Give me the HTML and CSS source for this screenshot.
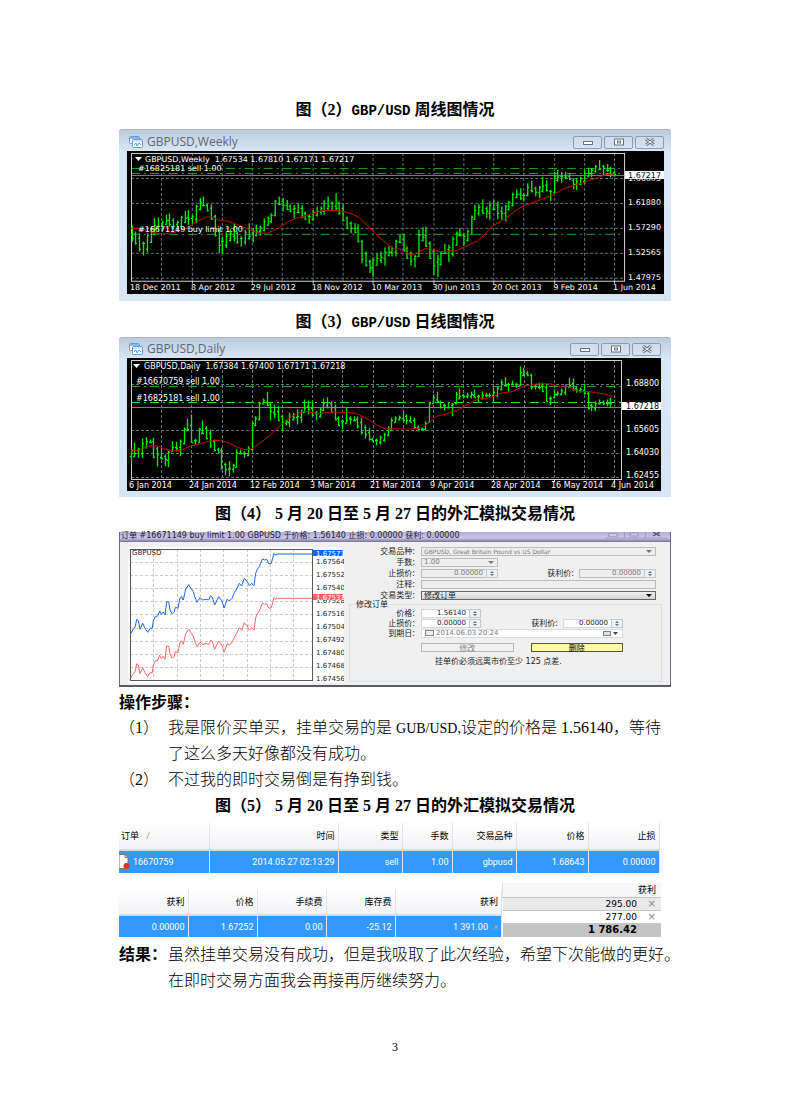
FILE: index.html
```html
<!DOCTYPE html>
<html lang="zh-CN">
<head>
<meta charset="utf-8">
<title>外汇模拟交易</title>
<link rel="stylesheet" href="styles.css">
</head>
<body>
<main class="page">
  <h2 class="caption">图（2）<span class="pair">GBP/USD</span> 周线图情况</h2>
  <figure class="window">
    <header class="window-bar">
      <svg class="window-icon" viewBox="0 0 14 12" aria-hidden="true"><rect x=".5" y=".5" width="10" height="7" rx="1" fill="#fff" stroke="#5b9be0"/><path d="M1 2h9" stroke="#5b9be0" stroke-width="1.4"/><rect x="3.5" y="3.500" width="10" height="8" rx="1" fill="#fff" stroke="#5b9be0"/><path d="M4 5h9" stroke="#a9cdf3"/><path d="M5 9l2-2 1 3 2-3 2 2" fill="none" stroke="#5b9be0"/></svg>
      <span class="window-title">GBPUSD,Weekly</span>
      <span class="window-buttons">
        <button type="button" aria-label="最小化"><svg viewBox="0 0 12 8"><rect x="1.500" y="3.500" width="9" height="3" fill="#fff" stroke="#66707c"/></svg></button>
        <button type="button" aria-label="最大化"><svg viewBox="0 0 12 8"><rect x="1.500" y="1" width="9" height="6" fill="#fff" stroke="#66707c"/><rect x="4.500" y="3" width="3" height="2" fill="none" stroke="#66707c"/></svg></button>
        <button type="button" aria-label="关闭"><svg viewBox="0 0 12 8"><path d="M2 1l8 6M10 1l-8 6" stroke="#66707c" stroke-width="3"/><path d="M2 1l8 6M10 1l-8 6" stroke="#fff" stroke-width="1"/></svg></button>
      </span>
    </header>
    <svg class="chart" id="weekly" viewBox="0 0 538 143" role="img" aria-label="GBPUSD 周线图">
      <g class="plot"></g>
      <path d="M8 6h7l-3.500 4z" fill="#fff"/>
      <text x="18" y="11">GBPUSD,Weekly&#160; 1.67534 1.67810 1.67171 1.67217</text>
      <text x="11" y="20">#16825181 sell 1.00</text>
      <text x="11" y="81">#16671149 buy limit 1.00</text>
      <g class="prices">
        <text x="502" y="30">1.66605</text>
        <rect x="499" y="20" width="39" height="8" fill="#fff"/>
        <text x="502" y="27" class="current">1.67217</text>
        <text x="502" y="54">1.61880</text><text x="502" y="79">1.57290</text>
        <text x="502" y="104">1.52565</text><text x="502" y="129">1.47975</text>
      </g>
      <g class="dates">
        <text x="3" y="139">18 Dec 2011</text><text x="64" y="139">8 Apr 2012</text><text x="124" y="139">29 Jul 2012</text>
        <text x="185" y="139">18 Nov 2012</text><text x="245" y="139">10 Mar 2013</text><text x="306" y="139">30 Jun 2013</text>
        <text x="366" y="139">20 Oct 2013</text><text x="427" y="139">9 Feb 2014</text><text x="487" y="139">1 Jun 2014</text>
      </g>
    </svg>
  </figure>

  <h2 class="caption caption-second">图（3）<span class="pair">GBP/USD</span> 日线图情况</h2>
  <figure class="window window-daily">
    <header class="window-bar">
      <svg class="window-icon" viewBox="0 0 14 12" aria-hidden="true"><rect x=".5" y=".5" width="10" height="7" rx="1" fill="#fff" stroke="#5b9be0"/><path d="M1 2h9" stroke="#5b9be0" stroke-width="1.4"/><rect x="3.500" y="3.500" width="10" height="8" rx="1" fill="#fff" stroke="#5b9be0"/><path d="M4 5h9" stroke="#a9cdf3"/><path d="M5 9l2-2 1 3 2-3 2 2" fill="none" stroke="#5b9be0"/></svg>
      <span class="window-title">GBPUSD,Daily</span>
      <span class="window-buttons">
        <button type="button" aria-label="最小化"><svg viewBox="0 0 12 8"><rect x="1.500" y="3.500" width="9" height="3" fill="#fff" stroke="#66707c"/></svg></button>
        <button type="button" aria-label="最大化"><svg viewBox="0 0 12 8"><rect x="1.500" y="1" width="9" height="6" fill="#fff" stroke="#66707c"/><rect x="4.500" y="3" width="3" height="2" fill="none" stroke="#66707c"/></svg></button>
        <button type="button" aria-label="关闭"><svg viewBox="0 0 12 8"><path d="M2 1l8 6M10 1l-8 6" stroke="#66707c" stroke-width="3"/><path d="M2 1l8 6M10 1l-8 6" stroke="#fff" stroke-width="1"/></svg></button>
      </span>
    </header>
    <svg class="chart" id="daily" viewBox="0 0 534 133" role="img" aria-label="GBPUSD 日线图">
      <g class="plot"></g>
      <path d="M6 6h7l-3.500 4z" fill="#fff"/>
      <text x="17" y="11">GBPUSD,Daily&#160; 1.67384 1.67400 1.67171 1.67218</text>
      <text x="9" y="26">#16670759 sell 1.00</text>
      <text x="9" y="43">#16825181 sell 1.00</text>
      <g class="prices">
        <text x="499" y="28">1.68800</text>
        <rect x="495" y="44" width="39" height="8" fill="#fff"/>
        <text x="499" y="51" class="current">1.67218</text>
        <text x="499" y="74">1.65605</text><text x="499" y="97">1.64030</text><text x="499" y="120">1.62455</text>
      </g>
      <g class="dates">
        <text x="2" y="130">6 Jan 2014</text><text x="62" y="130">24 Jan 2014</text><text x="123" y="130">12 Feb 2014</text>
        <text x="183" y="130">3 Mar 2014</text><text x="243" y="130">21 Mar 2014</text><text x="303" y="130">9 Apr 2014</text>
        <text x="364" y="130">28 Apr 2014</text><text x="424" y="130">16 May 2014</text><text x="484" y="130">4 Jun 2014</text>
      </g>
    </svg>
  </figure>

  <h2 class="caption caption-third">图（4） 5 月 20 日至 5 月 27 日的外汇模拟交易情况</h2>
  <form class="order" onsubmit="return false">
    <header class="order-bar">
      <span>订单 #16671149 buy limit 1.00 GBPUSD 于价格: 1.56140 止损: 0.00000 获利: 0.00000</span>
      <svg class="order-controls" viewBox="0 0 66 10" aria-hidden="true"><path d="M20.500 0v6M41.500 0v6M1 6h62" stroke="#8c84a8" fill="none" stroke-width=".6"/><rect x="5" y="2" width="8" height="2" fill="#fff" stroke="#77708f" stroke-width=".7"/><rect x="26" y="1" width="8" height="3" fill="#ccc6e6" stroke="#8c84a8" stroke-width=".7"/><path d="M49 0l7 4M56 0l-7 4" stroke="#555068" stroke-width="1.400"/></svg>
    </header>
    <div class="order-body">
      <svg class="ticks" id="ticks" viewBox="0 0 216 136" role="img" aria-label="GBPUSD 报价走势">
        <g class="plot"></g>
        <text x="4" y="8">GBPUSD</text>
        <g id="tick-prices"></g>
        <rect x="185" y="3" width="30" height="6" fill="#06f"/><text x="188" y="9" class="tag">1.67571</text>
        <rect x="185" y="47" width="30" height="6" fill="#ff5c5c"/><text x="188" y="53" class="tag">1.67531</text>
      </svg>
      <div class="fields">
        <div class="rows">
          <div class="row"><label for="symbol">交易品种:</label><span class="drop wide small"><select id="symbol" disabled><option>GBPUSD, Great Britain Pound vs US Dollar</option></select></span></div>
          <div class="row"><label for="lots">手数:</label><span class="drop mid"><select id="lots" disabled><option>1.00</option></select></span></div>
          <div class="row"><label for="sl">止损价:</label><span class="spin mid off"><input id="sl" value="0.00000" disabled><i></i></span><label class="second" for="tp">获利价:</label><span class="spin mid off"><input id="tp" value="0.00000" disabled><i></i></span></div>
          <div class="row"><label for="note">注释:</label><input class="note" id="note" disabled></div>
          <div class="row"><label for="type">交易类型:</label><span class="drop wide active"><select id="type"><option>修改订单</option></select></span></div>
        </div>
        <fieldset class="modify">
          <legend>修改订单</legend>
          <div class="row"><label for="price">价格:</label><span class="spin"><input id="price" value="1.56140"><i></i></span></div>
          <div class="row"><label for="sl2">止损价:</label><span class="spin"><input id="sl2" value="0.00000"><i></i></span><label class="second" for="tp2">获利价:</label><span class="spin"><input id="tp2" value="0.00000"><i></i></span></div>
          <div class="row"><label for="expiry">到期日:</label><span class="date"><input type="checkbox" aria-label="启用到期日"><input id="expiry" value="2014.06.03 20:24"><svg viewBox="0 0 15 7" aria-hidden="true"><rect x=".5" y="1.500" width="7" height="4" fill="#dde3ea" stroke="#77808c"/><path d="M10 2h5l-2.500 3z" fill="#345"/></svg></span></div>
          <div class="row actions"><button type="button" class="edit" disabled>修改</button><button type="button" class="delete">删除</button></div>
          <p class="hint">挂单价必须远离市价至少 125 点差.</p>
        </fieldset>
      </div>
    </div>
  </form>

  <h3 class="steps-title">操作步骤：</h3>
  <ol class="steps">
    <li><span class="num">（1）</span><span>我是限价买单买，挂单交易的是 <span class="code">GUB/USD,</span>设定的价格是 1.56140，等待了这么多天好像都没有成功。</span></li>
    <li><span class="num">（2）</span><span>不过我的即时交易倒是有挣到钱。</span></li>
  </ol>
  <h2 class="caption caption-inline">图（5） 5 月 20 日至 5 月 27 日的外汇模拟交易情况</h2>

  <table class="grid orders">
    <colgroup><col class="c-id"><col class="c-time"><col class="c-type"><col class="c-lots"><col class="c-sym"><col class="c-price"><col class="c-sl"></colgroup>
    <thead><tr><th class="left">订单 <span class="sort">/</span></th><th>时间</th><th>类型</th><th>手数</th><th>交易品种</th><th>价格</th><th>止损</th></tr></thead>
    <tbody><tr><td class="left"><span class="order-id"><svg viewBox="0 0 11 16" aria-hidden="true"><path d="M0 .5h6l3 3v11H0z" fill="#fff" stroke="#8a7a6a"/><path d="M6 .5v3h3" fill="none" stroke="#8a7a6a"/><circle cx="7.500" cy="12" r="3" fill="#d8391c"/></svg>16670759</span></td><td>2014.05.27 02:13:29</td><td>sell</td><td>1.00</td><td>gbpusd</td><td>1.68643</td><td>0.00000</td></tr></tbody>
  </table>

  <div class="results">
    <table class="grid profit">
      <colgroup><col class="p-a"><col class="p-b"><col class="p-b"><col class="p-b"><col></colgroup>
      <thead><tr><th>获利</th><th>价格</th><th>手续费</th><th>库存费</th><th>获利</th></tr></thead>
      <tbody><tr><td>0.00000</td><td>1.67252</td><td>0.00</td><td>-25.12</td><td>1 391.00 <span class="cross">×</span></td></tr></tbody>
    </table>
    <table class="totals">
      <thead><tr><th>获利</th></tr></thead>
      <tbody>
        <tr class="shade"><td>295.00<span class="x">×</span></td></tr>
        <tr><td>277.00<span class="x">×</span></td></tr>
        <tr class="sum"><td>1 786.42<span class="x"></span></td></tr>
      </tbody>
    </table>
  </div>

  <div class="outcome"><strong>结果：</strong><p>虽然挂单交易没有成功，但是我吸取了此次经验，希望下次能做的更好。在即时交易方面我会再接再厉继续努力。</p></div>
  <footer class="page-number">3</footer>
</main>
<script src="charts.js"></script>
</body>
</html>
```

FILE: styles.css
```css
* { box-sizing: border-box; }
body {
  margin: 0;
  background: #fff;
  color: #000;
  font: 16px/26px "Liberation Serif", "Noto Sans CJK SC", serif;
}
.page { padding: 97px 121px 0 119px; }

.caption { margin: 0 0 6px; font-size: 16px; line-height: 26px; font-weight: 700; text-align: center; }
.caption-second { margin: 8px 0 2px; }
.caption-third { margin: 4px 0 5px; }
.caption-inline { margin: 0 0 4px; }
.pair { font: 700 14px/1 "Liberation Mono", monospace; }

/* chart windows */
.window {
  margin: 0;
  padding: 0 7px 7px 8px;
  background: linear-gradient(#bccbdc, #dbe7f4 22px, #d7e4f2);
  border-top: 1px solid #a9b5c2;
  border-radius: 3px 3px 0 0;
}
.window-daily { padding: 0 10px 6px 8px; }
.window-bar { display: flex; align-items: center; gap: 4px; height: 21px; padding-left: 2px; padding-top: 3px; }
.window-daily .window-bar { height: 20px; }
.window-icon { width: 14px; height: 12px; }
.window-title { flex: 1; color: #5c6873; font: 12px/18px "Open Sans", sans-serif; }
.window-buttons { display: flex; gap: 2px; }
.window-buttons button {
  display: flex; align-items: center; justify-content: center;
  width: 29px; height: 13px; padding: 0;
  background: linear-gradient(#cfdbe9, #d6e2ef);
  border: 1px solid #8b9bb0; border-radius: 2px;
}
.window-buttons svg { width: 12px; height: 8px; }
.chart { display: block; width: 100%; background: #000; }
.chart text { fill: #fff; font: 8px "DejaVu Sans", sans-serif; }
.chart .current { fill: #000; }
.frame { fill: none; stroke: #d0d0d0; }
.grid-line { stroke: #66727f; stroke-dasharray: 3 2; fill: none; }
.level { stroke: #22a022; stroke-dasharray: 9 4 2 4; fill: none; }
.level.bright { stroke: #2fe02f; }
.last { stroke: #77828f; }
.bars { stroke: #00f000; stroke-width: 1.3; fill: none; }
.average { stroke: #c80000; fill: none; }

/* order dialog */
.order {
  color: #222;
  background: #f0f0f0;
  border: 1px solid #6d6880;
  border-top: 0; border-bottom: 2px solid #5a5a66;
  font: 8px/9px "DejaVu Sans", "Noto Sans CJK SC", sans-serif;
}
.order-bar {
  display: flex; justify-content: space-between; height: 10px; padding-left: 1px;
  background: linear-gradient(#b4abd8, #cbc5ea 60%, #77719a);
  line-height: 8px; white-space: nowrap;
}
.order-controls { width: 66px; height: 10px; }
.order-body { display: flex; gap: 5px; padding: 5px 8px 2px; }
.ticks { width: 216px; flex: none; align-self: flex-start; background: #fff; }
.ticks text { fill: #222; font: 7px "DejaVu Sans", sans-serif; }
.ticks .tag { fill: #fff; }
.ticks .grid-line { stroke: #c8cccc; stroke-width: 1; }
.ticks .frame { stroke: #555; }
.bid, .ask { fill: none; stroke: #ff6666; }
.ask { stroke: #1a66ee; }
.fields { flex: 1; }
.rows { display: flex; flex-direction: column; gap: 2px; padding-right: 6px; }
.row { display: flex; align-items: center; height: 9px; }
.row label { width: 66px; margin-right: 6px; text-align: right; white-space: nowrap; }
.row .second { flex: 1; width: auto; margin-right: 5px; }
.order input, .order select {
  min-width: 0; height: 9px; padding: 0 2px; margin: 0;
  color: #222; background: #fff; border: 1px solid #d4d8dc; border-radius: 0;
  font: 7px/7px "DejaVu Sans", "Noto Sans CJK SC", sans-serif;
  appearance: none; outline: 0; opacity: 1;
}
.order input:disabled, .order select:disabled { color: #777; background: #eee; border-color: #bbb; }
.drop { position: relative; display: flex; }
.drop select { width: 100%; }
.drop.wide, .note { flex: 1; }
.drop::after {
  content: ""; position: absolute; right: 4px; top: 3px;
  border: 3px solid transparent; border-top-color: #777; border-bottom: 0;
}
.order .small select { font-size: 6px; }
.order .active select { font-size: 8px; background: linear-gradient(#f2f2f2, #d2d2d2); border-color: #666; }
.drop.active::after { border-top-color: #000; }
.mid { width: 77px; }
.spin { position: relative; display: flex; width: 60px; }
.spin.mid { width: 77px; }
.spin input { width: 100%; padding-right: 14px; text-align: right; }
.spin i {
  position: absolute; right: 0; top: 0; width: 12px; height: 9px;
  border: 1px solid #c4c8cc; background: #eef1f4;
}
.spin i::before, .spin i::after { content: ""; position: absolute; left: 3px; top: 1px; border: 2px solid transparent; border-top: 0; border-bottom-color: #56729a; }
.spin i::after { top: 4px; border-top: 2px solid #56729a; border-bottom: 0; }
.modify { margin: 1px 0 0; padding: 0 38px 15px 0; min-width: 0; border: 1px solid #d5dfe5; }
.modify legend { margin-left: 5px; padding: 0 1px; line-height: 8px; }
.modify .row { height: 9px; margin-bottom: 1px; }
.modify .row label:first-child { width: 65px; }
.date { display: flex; align-items: center; flex: 1; padding: 0 4px 0 3px; height: 9px; background: #fff; border: 1px solid #d8dcdf; }
.date input { flex: 1; height: 7px; border: 0; color: #777; }
.date input[type="checkbox"] { flex: none; width: 9px; height: 6px; border: 1px solid #888; background: #eee; }
.date svg { width: 15px; height: 7px; }
.modify .actions { gap: 17px; margin: 5px 0; padding-left: 71px; }
.actions button { flex: 1; height: 9px; padding: 0; font: 8px/7px "Noto Sans CJK SC", sans-serif; border: 1px solid #b5b5b5; background: #f1f1f1; color: #888; }
.actions .delete { color: #000; background: #ffff99; border-color: #555; }
.hint { margin: 0 0 0 85px; white-space: nowrap; }

/* body text */
.steps-title { margin: 4px 0 0; font-size: 16px; line-height: 24px; }
.steps { margin: 0; padding: 0; list-style: none; font-weight: 300; }
.steps li { display: flex; }
.num { flex: none; width: 49px; }
.code { font-size: 14px; line-height: 1; }

/* trade tables */
table { border-collapse: collapse; }
.grid { table-layout: fixed; font: 9px/12px Roboto, "Noto Sans CJK SC", sans-serif; }
.grid th, .grid td { padding: 0 3px 0 0; text-align: right; white-space: nowrap; border-right: 1px solid #e2e4e8; }
.grid th { height: 27px; font-weight: 400; background: linear-gradient(#fff, #f1f2f4); border-bottom: 2px solid #dcdcdc; }
.grid td { height: 23px; color: #fff; background: #3399ff; }
.grid .left { padding-left: 2px; text-align: left; }
.grid td.left { padding-left: 0; }
.orders { width: 540px; }
.c-id { width: 90px; } .c-time { width: 129px; } .c-type { width: 64px; } .c-lots { width: 50px; }
.c-sym { width: 64px; } .c-price { width: 72px; } .c-sl { width: 71px; }
.sort { margin-left: 5px; color: #999; }
.order-id { display: flex; align-items: center; gap: 3px; }
.order-id svg { width: 11px; height: 16px; }
.results { display: flex; align-items: flex-end; margin-top: 10px; }
.profit { width: 383px; }
.profit th { height: 25px; }
.profit td { height: 22px; }
.p-a, .p-b { width: 69px; }
.cross { margin-left: 3px; color: #d9a066; }
.totals { width: 159px; font: 9px/12px "DejaVu Sans", "Noto Sans CJK SC", sans-serif; }
.totals th, .totals td { height: 13px; padding: 0 5px 0 0; text-align: right; white-space: nowrap; border-bottom: 1px solid #c4c4c4; }
.totals th { height: 15px; font-weight: 400; background: #f6f6f7; border-left: 1px solid #ddd; }
.totals .shade { background: #e9e9e9; }
.totals .sum { background: #c4c4c4; font-weight: 700; font-size: 10px; }
.x { display: inline-block; width: 19px; color: #888; font-size: 10px; }

.outcome { display: flex; margin: 5px -10px 0 0; font-weight: 300; }
.outcome strong { flex: none; width: 49px; font-weight: 700; }
.outcome p { margin: 0; }
.page-number { margin-top: 40px; text-align: center; font-size: 12px; }
```

FILE: charts.js
```js
const NS = "http://www.w3.org/2000/svg";
function add(parent, tag, attrs, text) {
  const node = document.createElementNS(NS, tag);
  for (const key in attrs) node.setAttribute(key, attrs[key]);
  if (text) node.textContent = text;
  parent.appendChild(node);
}

// Series values are stored three units to one drawing unit.
function drawChart(id, c) {
  const plot = document.querySelector("#" + id + " .plot");
  const X = v => (v / 3 - c.dx).toFixed(1);
  const Y = v => (v / 3 - c.dy).toFixed(1);
  const [l, t, r, b] = c.frame;
  for (let i = 1; i <= c.columns; i++) {
    const x = Math.round(l + i * c.step) + 0.5;
    add(plot, "path", { class: "grid-line", d: `M${x} ${t}V${b}` });
    if (c.marks && i % 2 === 0) add(plot, "path", { class: "frame", d: `M${x} ${b}v3` });
  }
  c.rows.forEach(v => add(plot, "path", { class: "grid-line", d: `M${l} ${Math.round(Y(v)) + 0.5}H${r}` }));
  c.levels.forEach(([v, kind]) => add(plot, "path", { class: "level " + kind, d: `M${l} ${Math.round(Y(v)) + 0.5}H${r}` }));
  if (c.last) add(plot, "path", { class: "last", d: `M${l} ${Math.round(Y(c.last)) + 0.5}H${r}` });
  add(plot, "rect", { class: "frame", x: l + 0.5, y: t + 0.5, width: r - l, height: b - t });
  if (c.bars) {
    const mids = [];
    for (let i = 0; i < c.bars.length; i += 2) mids.push((c.bars[i] + c.bars[i + 1]) / 2);
    let d = "";
    mids.forEach((m, i) => {
      const x = Math.round(X(c.first + i * 11.33)) + 0.5;
      const hi = c.bars[2 * i], lo = c.bars[2 * i + 1];
      const fit = v => Math.round(Y(Math.max(hi + 4, Math.min(lo - 4, v)))) + 0.5;
      d += `M${x} ${Y(hi)}V${Y(lo)}M${x - 1.5} ${fit(mids[i - 1] ?? m)}h1M${x + 0.5} ${fit(mids[i + 1] ?? m)}h1`;
    });
    add(plot, "path", { class: "bars", d });
  }
  c.lines.forEach(({ kind, shift, points }) => {
    let d = "";
    for (let i = 0; i < points.length; i += 2) d += (i ? "L" : "M") + X(points[i]) + " " + Y(points[i + 1] + (shift || 0));
    add(plot, "path", { class: kind, d });
  });
}

drawChart("weekly", {
  dx: 17, dy: 61, frame: [4, 2, 498, 130], step: 30.25, columns: 16, marks: true,
  rows: [265, 340, 415, 490, 565], levels: [[234, ""], [250, ""], [433, ""]], last: 256, first: 65,
  bars: [408,455,425,465,430,485,455,497,430,488,412,460,385,435,382,425,393,420,375,405,370,410,385,420,393,425,378,415,363,400,360,405,
    375,400,345,400,325,362,320,350,340,365,343,390,375,440,415,490,440,490,428,475,418,455,400,455,425,462,440,470,420,465,400,450,
    415,458,405,440,408,438,385,425,380,408,370,400,330,380,320,345,325,365,330,360,343,368,345,385,340,370,345,385,365,390,375,402,
    360,392,350,380,350,375,330,375,320,360,335,362,310,362,335,375,343,395,380,418,395,430,400,430,403,458,450,520,485,530,510,550,
    503,562,490,528,485,520,473,528,470,500,470,500,450,500,435,460,432,485,470,508,485,528,495,533,420,502,412,455,410,472,455,508,
    478,555,495,562,485,527,462,492,465,517,440,500,425,468,415,440,430,468,420,455,377,435,345,390,343,378,328,372,350,385,335,390,
    330,360,335,388,350,390,345,395,333,362,308,350,298,325,295,330,310,335,280,320,272,308,290,320,288,325,262,308,270,305,300,333,
    245,310,240,275,245,278,245,268,250,270,265,298,265,300,260,285,240,282,233,262,235,262,225,248,210,240,225,258,222,245,230,262,242,260],
  lines: [{ kind: "average", points: [63,415,95,417,130,428,160,433,195,427,225,418,255,398,290,381,305,381,330,392,355,394,385,405,415,418,
    450,430,475,430,505,415,540,392,570,382,605,372,640,362,690,362,720,370,745,380,775,408,805,438,835,465,855,478,870,477,900,493,915,496,
    935,482,950,476,990,485,1040,483,1080,465,1105,453,1125,435,1145,412,1190,385,1225,358,1250,345,1280,335,1325,318,1360,298,1390,288,
    1425,277,1460,265,1490,254,1515,252] }]
});

drawChart("daily", {
  dx: 16.67, dy: 53.5, frame: [4, 2, 494, 121], step: 30.2, columns: 16, marks: true,
  rows: [237, 376, 446, 517], levels: [[243, ""], [293, "bright"]], last: 307, first: 61,
  bars: [432,478,415,458,430,460,402,460,398,432,405,415,400,460,425,487,430,465,450,485,438,488,410,442,412,440,405,455,368,420,343,380,
    330,415,403,420,370,415,348,388,365,405,375,430,405,440,430,445,430,495,475,512,470,515,478,505,435,490,435,450,440,460,425,455,
    352,438,335,365,292,348,282,300,262,305,295,348,300,340,305,350,330,378,345,362,325,368,325,348,315,360,315,355,285,325,288,330,
    290,335,320,348,310,340,283,320,278,312,290,325,300,348,335,365,345,375,308,358,335,360,335,350,335,372,340,390,362,402,370,408,
    400,412,402,422,393,420,385,412,365,395,340,380,335,355,333,348,320,350,330,360,335,355,340,372,362,380,370,378,350,378,292,355,
    270,298,262,292,288,312,298,318,292,312,295,335,262,300,252,285,268,282,265,282,262,282,255,280,270,295,260,285,265,278,265,278,
    250,290,245,278,225,258,218,245,235,262,228,242,235,250,185,245,190,215,200,215,208,255,240,255,235,255,235,262,238,292,275,302,
    255,282,260,275,252,272,240,272,220,250,222,258,245,265,250,265,238,270,262,315,298,320,290,320,285,300,288,302,285,305,280,310],
  lines: [{ kind: "average", points: [61,440,90,436,115,425,140,424,160,432,185,440,210,438,240,425,270,418,300,409,330,408,355,415,380,428,
    405,436,425,433,450,415,480,392,505,368,530,345,555,330,580,320,625,328,660,323,710,323,740,328,775,345,800,362,825,373,865,373,
    900,374,935,370,955,355,980,335,1010,328,1040,318,1070,300,1105,283,1140,280,1175,265,1205,262,1240,245,1280,238,1320,238,
    1350,247,1375,247,1400,260,1440,262,1490,270,1507,277] }]
});

const ticks = [61,402,70,388,76,380,80,358,85,362,90,388,98,370,105,385,113,397,120,385,127,385,130,362,136,350,143,348,149,333,154,343,
  160,336,165,345,170,305,176,305,180,330,187,342,193,336,196,322,204,325,210,293,215,290,220,300,227,268,236,254,243,265,250,275,
  254,290,261,307,270,293,277,300,290,298,296,300,302,287,307,292,314,315,326,290,336,303,342,324,352,298,358,303,366,295,372,280,
  380,267,388,250,395,258,403,235,412,245,418,257,425,250,432,257,437,220,442,208,448,200,452,190,457,177,464,180,470,178,477,192,
  484,190,492,160,497,166,500,162,607,162];
drawChart("ticks", {
  dx: 18, dy: 47, frame: [2, 2, 184, 133], step: 23.3, columns: 7,
  rows: [186, 225, 265, 304, 343, 383, 422, 462, 501], levels: [],
  lines: [{ kind: "ask", points: ticks }, { kind: "bid", shift: 133, points: ticks }]
});
const scale = document.getElementById("tick-prices");
["1.67564", "1.67552", "1.67540", "1.67528", "1.67516", "1.67504", "1.67492", "1.67480", "1.67468", "1.67456"]
  .forEach((price, i) => add(scale, "text", { x: 188, y: 17 + i * 13 }, price));
```
